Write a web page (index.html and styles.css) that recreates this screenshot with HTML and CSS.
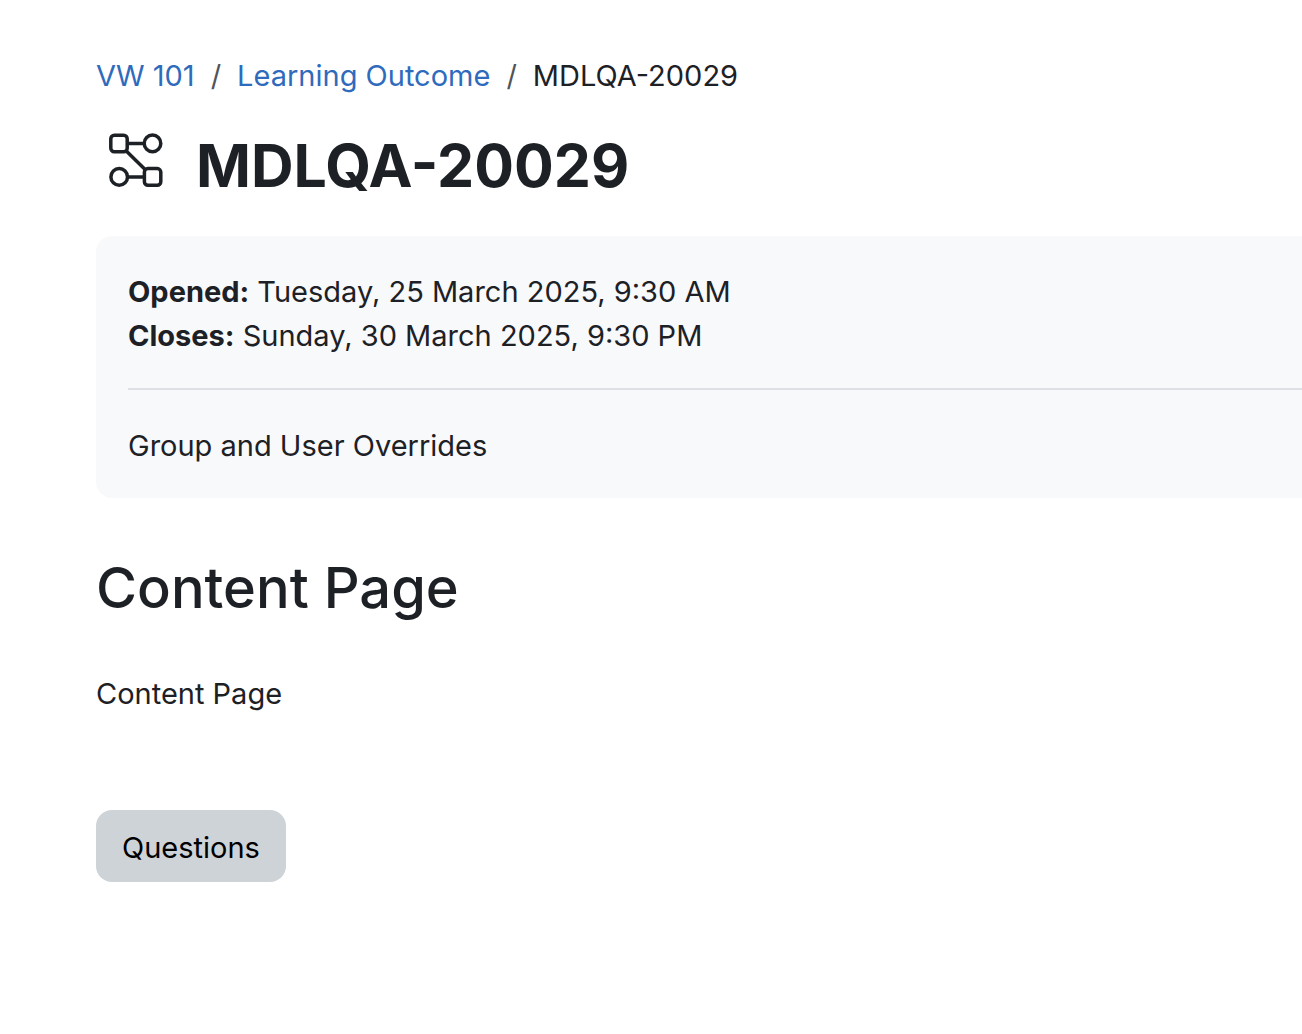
FILE: index.html
```html
<!DOCTYPE html>
<html lang="en">
<head>
    <meta charset="UTF-8">
    <meta name="viewport" content="width=device-width, initial-scale=1.0">
    <title>MDLQA-20029</title>
    <link rel="stylesheet" href="styles.css">
</head>
<body>
    <header class="page-header">
        <nav aria-label="Breadcrumb">
            <ol class="breadcrumb">
                <li><a href="#">VW 101</a></li>
                <li><a href="#">Learning Outcome</a></li>
                <li>MDLQA-20029</li>
            </ol>
        </nav>
        <div class="page-title">
            <svg class="activity-icon" viewBox="0 0 56 56" aria-hidden="true">
                <rect x="2.8" y="3.2" width="16.4" height="16.6" rx="3.5"/>
                <circle cx="44.5" cy="11.4" r="8.3"/>
                <circle cx="11.2" cy="44.9" r="8.3"/>
                <rect x="36.4" y="36.6" width="16.4" height="16.6" rx="3.5"/>
                <path d="M19 11.4h17.5M19.5 44.9h17M18.3 19l18.8 18.4"/>
            </svg>
            <h1>MDLQA-20029</h1>
        </div>
    </header>
    <main>
        <section class="activity-info">
            <div class="dates">
                <div><strong>Opened:</strong> Tuesday, 25 March 2025, 9:30 AM</div>
                <div><strong>Closes:</strong> Sunday, 30 March 2025, 9:30 PM</div>
            </div>
            <p class="description">Group and User Overrides</p>
        </section>
        <h2>Content Page</h2>
        <p class="contents">Content Page</p>
        <button type="button" class="btn">Questions</button>
    </main>
</body>
</html>
```
FILE: styles.css
```css
body {
    margin: 0;
    padding: 54px 0 54px 96px;
    background: #fff;
    color: #1d2125;
    font-family: Inter, sans-serif;
    font-size: 29px;
    line-height: 44px;
}
h1, h2, p {
    margin: 0;
}
a {
    color: #2f6bbd;
    text-decoration: none;
}
.breadcrumb {
    display: flex;
    margin: 0;
    padding: 0;
    list-style: none;
}
.breadcrumb li + li::before {
    content: "/";
    padding: 0 16px;
    color: #505559;
}
.page-title {
    display: flex;
    align-items: center;
    gap: 32px;
    padding: 24px 0 26px 12px;
}
.activity-icon {
    width: 56px;
    height: 56px;
    margin-bottom: 12px;
    fill: none;
    stroke: #1d2125;
    stroke-width: 3.5;
}
h1 {
    font-size: 59px;
    font-weight: 700;
    line-height: 88px;
}
.activity-info {
    padding: 34px 0 30px 32px;
    border-radius: 16px 0 0 16px;
    background: #f8f9fb;
}
.dates {
    padding-bottom: 30px;
    border-bottom: 2px solid #dee0e6;
}
.description {
    padding-top: 34px;
}
h2 {
    margin: 50px 0 44px;
    font-size: 56px;
    font-weight: 500;
    line-height: 80px;
}
.contents {
    margin-bottom: 94px;
}
.btn {
    padding: 14px 26px 10px;
    border: 0;
    border-radius: 16px;
    background: #ced3d7;
    color: #000;
    font: inherit;
    line-height: 48px;
    cursor: pointer;
}
```
